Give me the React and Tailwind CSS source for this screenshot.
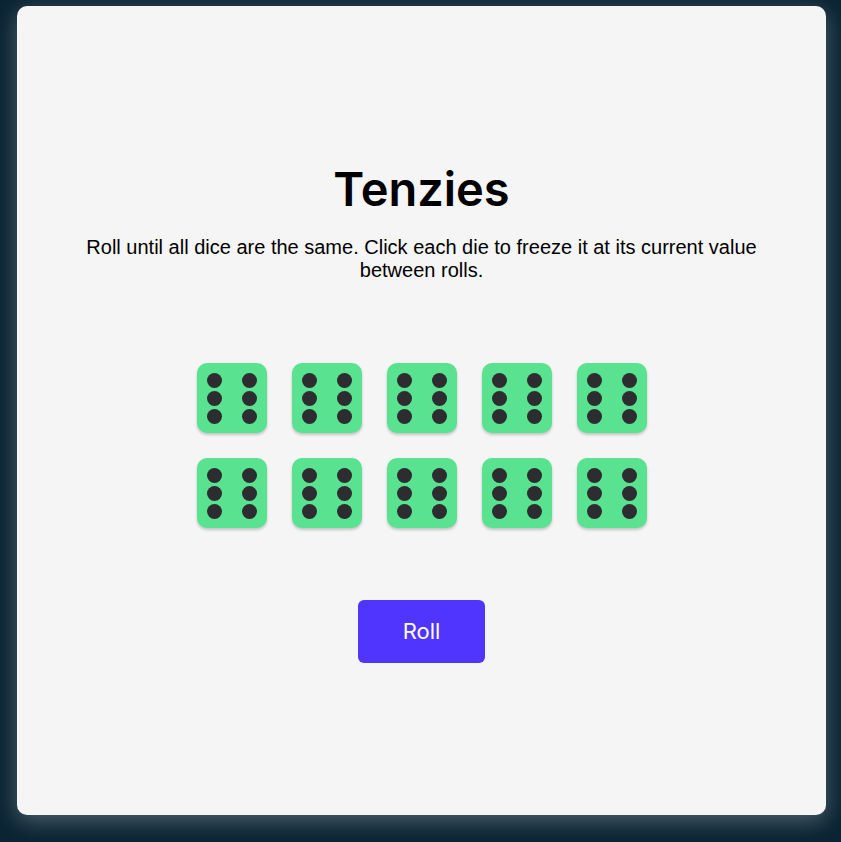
import React from 'react';

function Die({ value }) {
  return (
    <button className="w-[70px] h-[70px] rounded-[10px] bg-[#59E391] shadow-[0_2px_3px_rgba(0,0,0,0.2)] grid grid-cols-[15px_15px] grid-rows-[15px_15px_15px] gap-x-[20px] gap-y-[3px] place-content-center">
      {Array.from({ length: value }).map((_, i) => (
        <span key={i} className="w-[15px] h-[15px] rounded-full bg-[#2D2C30]" />
      ))}
    </button>
  );
}

export default function App() {
  const dice = Array.from({ length: 10 }, () => 6);

  return (
    <div className="min-h-screen bg-[#0B2434] pt-[6px] pl-[17px]">
      <main className="w-[809px] h-[809px] bg-[#F5F5F5] rounded-[10px] shadow-[0_6px_22px_rgba(255,255,255,0.28)] flex flex-col items-center pt-[159px]">
        <h1 className="text-[47px] font-semibold leading-none text-black font-['Inter',sans-serif]">Tenzies</h1>
        <p className="mt-[24px] w-[700px] text-center text-[20px] leading-[23px] text-black font-['Liberation_Sans',Arial,sans-serif]">
          Roll until all dice are the same. Click each die to freeze it at its current value between rolls.
        </p>
        <div className="mt-[81px] grid grid-cols-5 gap-[25px]">
          {dice.map((d, i) => (
            <Die key={i} value={d} />
          ))}
        </div>
        <button className="mt-[72px] w-[127px] h-[63px] rounded-[6px] bg-[#5035FF] text-white text-[22px] font-['Inter',sans-serif]">
          Roll
        </button>
      </main>
    </div>
  );
}
